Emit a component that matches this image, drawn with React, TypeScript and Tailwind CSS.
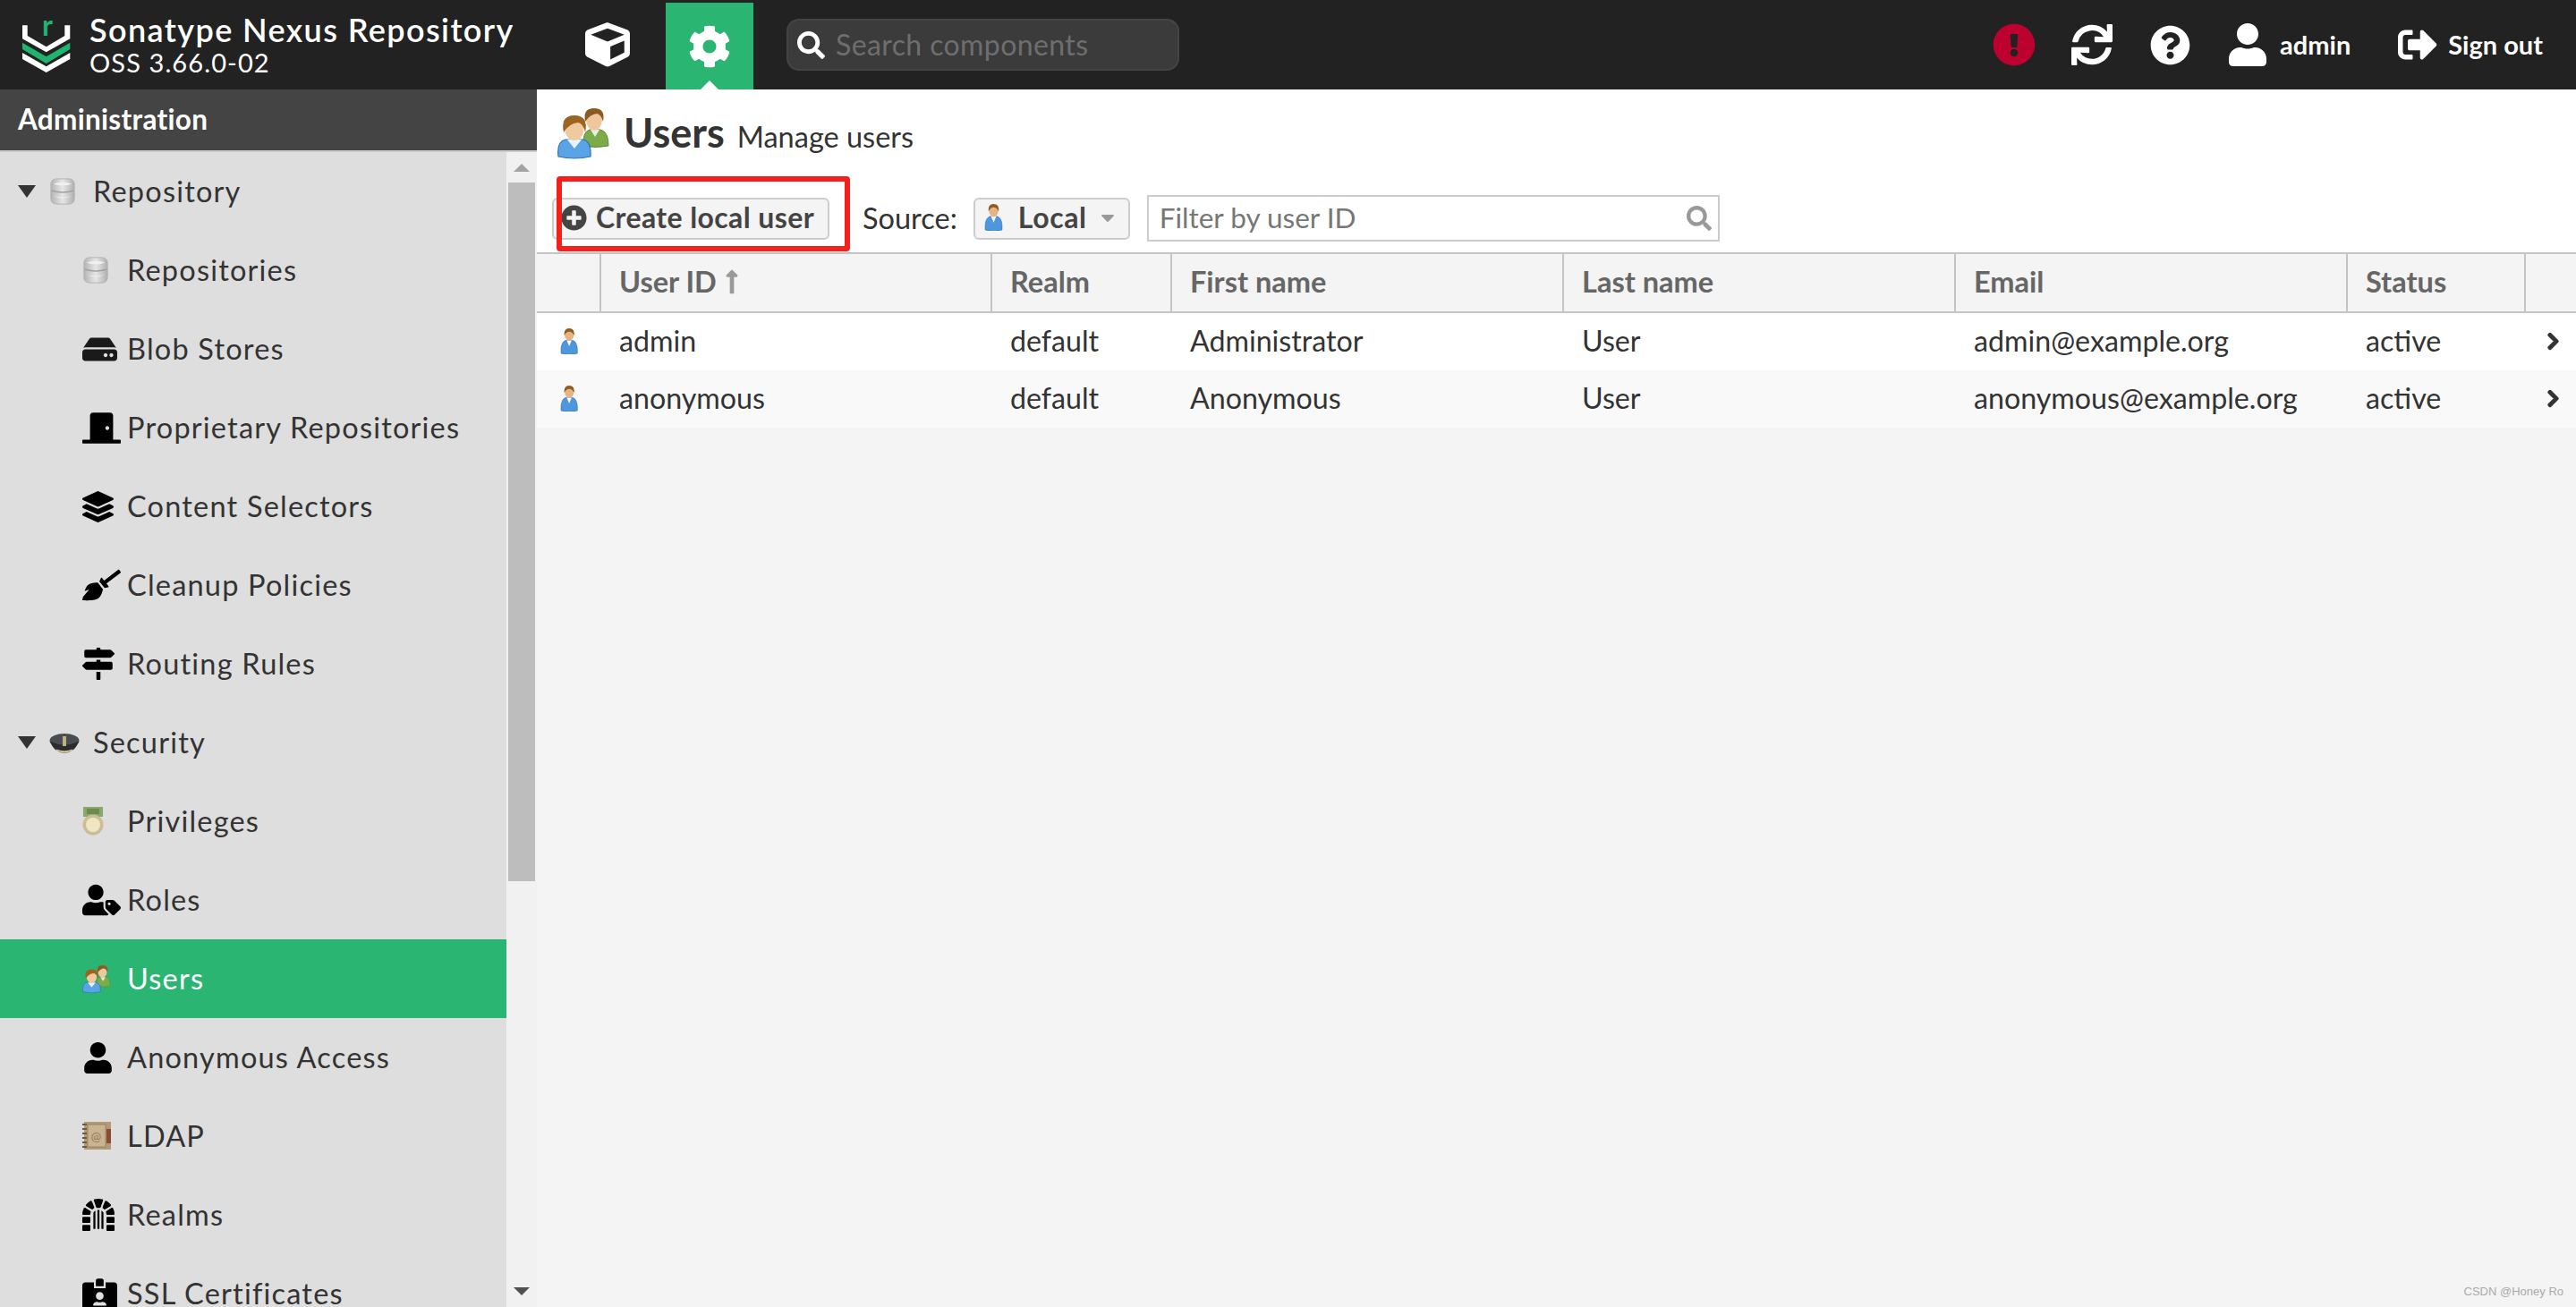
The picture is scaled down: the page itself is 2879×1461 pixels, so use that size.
import React from "react";
import {
  FaCube, FaCog, FaSearch, FaExclamationCircle, FaSync, FaQuestionCircle, FaUser, FaSignOutAlt,
  FaHdd, FaDoorClosed, FaLayerGroup, FaBroom, FaMapSigns, FaUserTag, FaDungeon, FaIdCardAlt,
  FaPlusCircle, FaCaretDown, FaChevronRight, FaLongArrowAltUp,
} from "react-icons/fa";

function Logo() {
  return (
    <svg width="54" height="58" viewBox="0 0 54 58" className="shrink-0 overflow-visible">
      <path d="M0 5.3 H5.7 V17 L26.7 29.3 L47.3 17 V5.3 H53.3 V20.3 L26.7 35.3 L0 20.3 Z" fill="#fff" />
      <path d="M0 24.7 L26.7 40.3 L53.3 24.7 V32 L26.7 48 L0 32 Z" fill="#1fb56e" />
      <path d="M0 36 L26.7 51.3 L53.3 36 V43 L26.7 58 L0 43 Z" fill="#fff" />
      <text x="28" y="17" textAnchor="middle" fontSize="32" fontWeight="700" fill="#1fb56e" fontFamily="Lato, sans-serif">r</text>
    </svg>
  );
}

function Db({ size = 30 }: { size?: number }) {
  return (
    <svg width={size} height={size} viewBox="0 0 30 32" className="blur-[0.5px]">
      <defs>
        <linearGradient id="dbg" x1="0" x2="1" y1="0" y2="0">
          <stop offset="0" stopColor="#b4b4b4" />
          <stop offset="0.5" stopColor="#e6e6e6" />
          <stop offset="1" stopColor="#b0b0b0" />
        </linearGradient>
      </defs>
      <rect x="1" y="1" width="28" height="30" rx="6" fill="url(#dbg)" stroke="#b0b0b0" />
      <path d="M4 7 Q15 3 26 7 Q15 11 4 7 Z" fill="#f0f0f0" />
      <path d="M2 15 Q15 19 28 15" fill="none" stroke="#a0a0a0" strokeWidth="1.6" />
      <path d="M4 21 Q15 25 26 21 Q15 27 4 21 Z" fill="#f2f2f2" />
    </svg>
  );
}

function Hat() {
  return (
    <svg width="34" height="26" viewBox="0 0 34 26" className="blur-[0.6px]">
      <ellipse cx="17" cy="11" rx="16.5" ry="8" fill="#4a4d50" />
      <path d="M1 12 Q17 19 33 12 Q30 20 24 23 Q17 26 10 23 Q4 20 1 12 Z" fill="#2a2c2f" />
      <path d="M8 20.5 Q17 24 26 20.5 V22.5 Q17 26 8 22.5 Z" fill="#cfc493" />
      <rect x="15" y="6" width="4" height="11" fill="#bdb183" />
    </svg>
  );
}

function Medal() {
  return (
    <svg width="24" height="32" viewBox="0 0 24 32" className="blur-[0.4px]">
      <rect x="1" y="0" width="22" height="11" fill="#8aa86a" />
      <rect x="5" y="2" width="14" height="6" fill="#6b8b4e" />
      <circle cx="12" cy="20" r="11.5" fill="#cdbd96" />
      <circle cx="12" cy="20" r="8" fill="#efe6c4" />
    </svg>
  );
}

function Users({ size = 60 }: { size?: number }) {
  return (
    <svg width={size} height={size} viewBox="0 0 60 60" className="blur-[0.4px]">
      <path d="M29 44 Q28 28 36 26 H48 Q57 28 57 44 Q43 47 29 44 Z" fill="#7cab4a" stroke="#5f8a36" strokeWidth="1" />
      <path d="M37 26 L42 34 L47 26 Z" fill="#e7f0dc" />
      <ellipse cx="41" cy="15" rx="9" ry="11.5" fill="#efc79c" />
      <path d="M31 17 Q28 2 41 2 Q54 2 51 17 Q49 9 44 8 Q36 9 31 17 Z" fill="#8a5a23" />
      <path d="M1 56 Q-1 39 9 37 H29 Q38 39 37 56 Q19 60 1 56 Z" fill="#5aa3e4" stroke="#2f74b8" strokeWidth="1.2" />
      <path d="M11 37 L19 47 L27 37 Z" fill="#e9f3fb" />
      <ellipse cx="19" cy="25" rx="10.5" ry="13" fill="#f1c99e" />
      <path d="M7 29 Q3 10 19 10 Q35 10 31 29 Q29 19 23 18 Q13 19 7 29 Z" fill="#9c6421" />
    </svg>
  );
}

function User1({ size = 24 }: { size?: number }) {
  return (
    <svg width={size * 0.7} height={size} viewBox="0 0 22 32" className="blur-[0.3px]">
      <path d="M1 31 Q0 18 6 15 L16 15 Q22 18 21 31 Q11 34 1 31 Z" fill="#4f97dc" stroke="#2a69a8" strokeWidth="0.6" />
      <path d="M8 15 L11 22 L14 15 Z" fill="#fff" />
      <ellipse cx="11" cy="8" rx="5.5" ry="7.5" fill="#e6b384" />
      <path d="M5 9 Q4 0 11 0 Q18 0 17 9 Q15 4 11 4 Q7 4 5 9 Z" fill="#8f5c22" />
    </svg>
  );
}

function Book() {
  return (
    <svg width="32" height="32" viewBox="0 0 32 32">
      <rect x="2" y="0" width="30" height="31" fill="#b39b77" />
      <rect x="6" y="3" width="20" height="25" fill="#c9b391" stroke="#8b7350" strokeWidth="0.7" />
      <rect x="27" y="8" width="5" height="16" fill="#8c4a32" />
      <path d="M0 3h5M0 8h5M0 13h5M0 18h5M0 23h5M0 28h5" stroke="#6c5a41" strokeWidth="2" />
      <text x="16" y="21" fontSize="14" textAnchor="middle" fill="#937b59" fontFamily="Lato, sans-serif">@</text>
    </svg>
  );
}

type Item = { label: string; icon: React.ReactNode; parent?: boolean; active?: boolean };

const items: Item[] = [
  { label: "Repository", icon: <Db />, parent: true },
  { label: "Repositories", icon: <Db /> },
  { label: "Blob Stores", icon: <FaHdd className="text-[39px] text-[#1a1a1a]" /> },
  { label: "Proprietary Repositories", icon: <FaDoorClosed className="text-[37px] w-[43px] text-black" /> },
  { label: "Content Selectors", icon: <FaLayerGroup className="text-[35px] text-black" /> },
  { label: "Cleanup Policies", icon: <FaBroom className="text-[36px] w-[43px] text-black" /> },
  { label: "Routing Rules", icon: <FaMapSigns className="text-[36px] text-black" /> },
  { label: "Security", icon: <Hat />, parent: true },
  { label: "Privileges", icon: <Medal /> },
  { label: "Roles", icon: <FaUserTag className="text-[36px] w-[43px] text-black" /> },
  { label: "Users", icon: <Users size={33} />, active: true },
  { label: "Anonymous Access", icon: <FaUser className="text-[35px] text-black" /> },
  { label: "LDAP", icon: <Book /> },
  { label: "Realms", icon: <FaDungeon className="text-[36px] text-black" /> },
  { label: "SSL Certificates", icon: <FaIdCardAlt className="text-[39px] text-black" /> },
];

function TreeRow({ item }: { item: Item }) {
  return (
    <div
      className={`flex h-[88px] shrink-0 items-center text-[32.5px] tracking-[1.2px] ${
        item.active ? "bg-[#2bb573] text-white" : "text-[#333]"
      } ${item.parent ? "pl-[20px]" : "pl-[92px]"}`}
    >
      {item.parent && <span className="mr-[15px] h-0 w-0 border-x-[10px] border-t-[14px] border-x-transparent border-t-[#333]" />}
      <span className={`flex shrink-0 items-center ${item.parent ? "w-[49px] pl-0" : "w-[50px]"}`}>{item.icon}</span>
      <span className="whitespace-nowrap">{item.label}</span>
    </div>
  );
}

const cols = "grid grid-cols-[72px_437px_201px_438px_438px_438px_199px_1fr]";

function HeadCell({ children }: { children?: React.ReactNode }) {
  return (
    <div className="flex items-center gap-[2px] border-r-2 border-[#c4c4c4] pb-[2px] pl-[20px] text-[32.5px] font-bold text-[#666] last:border-r-0">
      {children}
    </div>
  );
}

function Row({ cells, alt }: { cells: string[]; alt?: boolean }) {
  return (
    <div className={`${cols} h-[64px] pb-[1px] text-[32.2px] text-[#333] ${alt ? "bg-[#f9f9f9]" : "bg-white"}`}>
      <div className="flex items-center pl-[26px]">
        <User1 size={29} />
      </div>
      {cells.map((c, i) => (
        <div key={i} className="flex items-center pl-[20px] whitespace-nowrap">
          {c}
        </div>
      ))}
      <div className="flex items-center pl-[20px]">
        <FaChevronRight className="text-[21px] stroke-[40] text-[#333]" />
      </div>
    </div>
  );
}

export default function App() {
  return (
    <div className="flex h-screen w-screen flex-col overflow-hidden bg-[#f4f4f4] font-['Lato','Noto_Sans',sans-serif]">
      <header className="flex h-[100px] shrink-0 items-center bg-[#222] text-white">
        <div className="ml-[25px] mt-[4px]">
          <Logo />
        </div>
        <div className="ml-[21px] flex w-[554px] flex-col">
          <span className="text-[36px] leading-[40px] font-semibold tracking-[1.4px] whitespace-nowrap">Sonatype Nexus Repository</span>
          <span className="text-[29px] leading-[34px] tracking-[1.1px] whitespace-nowrap">OSS 3.66.0-02</span>
        </div>
        <div className="flex w-[90px] justify-start">
          <FaCube className="text-[50px]" />
        </div>
        <div className="relative mt-[3px] flex h-[97px] w-[98px] items-center justify-center bg-[#2bb573]">
          <FaCog className="text-[48px]" />
          <span className="absolute bottom-0 left-1/2 h-0 w-0 -translate-x-1/2 border-x-[10px] border-b-[10px] border-x-transparent border-b-white" />
        </div>
        <div className="ml-[37px] flex h-[58px] w-[439px] items-center rounded-[14px] border-2 border-[#444] bg-[#3b3b3b] pl-[10px]">
          <FaSearch className="text-[31px] text-white" />
          <span className="ml-[12px] text-[32px] tracking-[0.4px] text-[#6e6e6e]">Search components</span>
        </div>
        <div className="ml-auto flex items-center pr-[37px]">
          <FaExclamationCircle className="text-[48px] text-[#bc012f]" />
          <FaSync className="ml-[40px] text-[46px]" />
          <FaQuestionCircle className="ml-[42px] text-[45px]" />
          <FaUser className="ml-[40px] text-[48px]" />
          <span className="ml-[12px] text-[29px] font-bold">admin</span>
          <FaSignOutAlt className="ml-[53px] text-[44px]" />
          <span className="ml-[12px] text-[29px] font-bold">Sign out</span>
        </div>
      </header>

      <div className="flex min-h-0 flex-1">
        <aside className="flex w-[600px] shrink-0 flex-col">
          <div className="flex h-[70px] shrink-0 items-center border-b-2 border-[#ccc] bg-[#444] pl-[20px] text-[31.5px] font-bold tracking-[0.3px] text-white">
            Administration
          </div>
          <div className="flex min-h-0 flex-1">
            <div className="flex w-[566px] flex-col overflow-hidden bg-[#dedede]">
              {items.map((i) => (
                <TreeRow key={i.label} item={i} />
              ))}
            </div>
            <div className="flex w-[34px] flex-col bg-[#f1f1f1]">
              <div className="flex h-[34px] items-center justify-center">
                <span className="h-0 w-0 border-x-[9px] border-b-[9px] border-x-transparent border-b-[#a3a3a3]" />
              </div>
              <div className="ml-[2px] h-[781px] w-[30px] bg-[#bdbdbd]" />
              <div className="flex-1" />
              <div className="flex h-[36px] items-center justify-center">
                <span className="h-0 w-0 border-x-[9px] border-t-[9px] border-x-transparent border-t-[#505050]" />
              </div>
            </div>
          </div>
        </aside>

        <main className="relative min-w-0 flex-1">
          <div className="h-[182px] bg-white">
            <div className="flex h-[84px] items-center pl-[23px] pt-[13px]">
              <Users size={60} />
              <span className="ml-[14px] text-[45px] font-bold text-[#333]">Users</span>
              <span className="ml-[14px] mt-[10px] text-[32.5px] text-[#333]">Manage users</span>
            </div>
            <div className="relative flex items-center pl-[17px] pt-[34px]">
              <div className="flex h-[47px] w-[310px] items-center rounded-[6px] border-2 border-[#ccc] bg-[#f4f4f4] pb-[2px] pl-[8px] text-[32px] font-bold tracking-[0.4px] text-[#444]">
                <FaPlusCircle className="text-[29px] text-[#444]" />
                <span className="ml-[10px] whitespace-nowrap">Create local user</span>
              </div>
              <span className="ml-[37px] text-[32.5px] text-[#333]">Source:</span>
              <div className="ml-[18px] flex h-[47px] w-[175px] items-center rounded-[6px] border-2 border-[#ccc] bg-[#f4f4f4] pb-[2px] pl-[10px] text-[32px] font-bold tracking-[0.6px] text-[#444]">
                <User1 size={30} />
                <span className="ml-[17px]">Local</span>
                <FaCaretDown className="ml-[11px] text-[24px] text-[#999]" />
              </div>
              <div className="ml-[19px] flex h-[52px] w-[640px] items-center justify-between border-2 border-[#ccc] bg-white pl-[12px] pr-[7px] text-[31.5px] text-[#777]">
                <span>Filter by user ID</span>
                <FaSearch className="text-[28px] text-[#999]" />
              </div>
              <div className="pointer-events-none absolute left-[22px] top-[13px] h-[84px] w-[328px] rounded-[4px] border-[6px] border-[#f5201b]" />
            </div>
          </div>
          <div className={`${cols} h-[68px] border-y-2 border-[#c4c4c4] bg-[#f4f4f4]`}>
            <HeadCell />
            <HeadCell>
              User ID
              <FaLongArrowAltUp className="text-[30px] text-[#999]" />
            </HeadCell>
            <HeadCell>Realm</HeadCell>
            <HeadCell>First name</HeadCell>
            <HeadCell>Last name</HeadCell>
            <HeadCell>Email</HeadCell>
            <HeadCell>Status</HeadCell>
            <HeadCell />
          </div>
          <Row cells={["admin", "default", "Administrator", "User", "admin@example.org", "active"]} />
          <Row alt cells={["anonymous", "default", "Anonymous", "User", "anonymous@example.org", "active"]} />
          <span className="absolute right-[14px] bottom-[8px] font-['Liberation_Sans',sans-serif] text-[13px] text-[#aaa]">
            CSDN @Honey Ro
          </span>
        </main>
      </div>
    </div>
  );
}
